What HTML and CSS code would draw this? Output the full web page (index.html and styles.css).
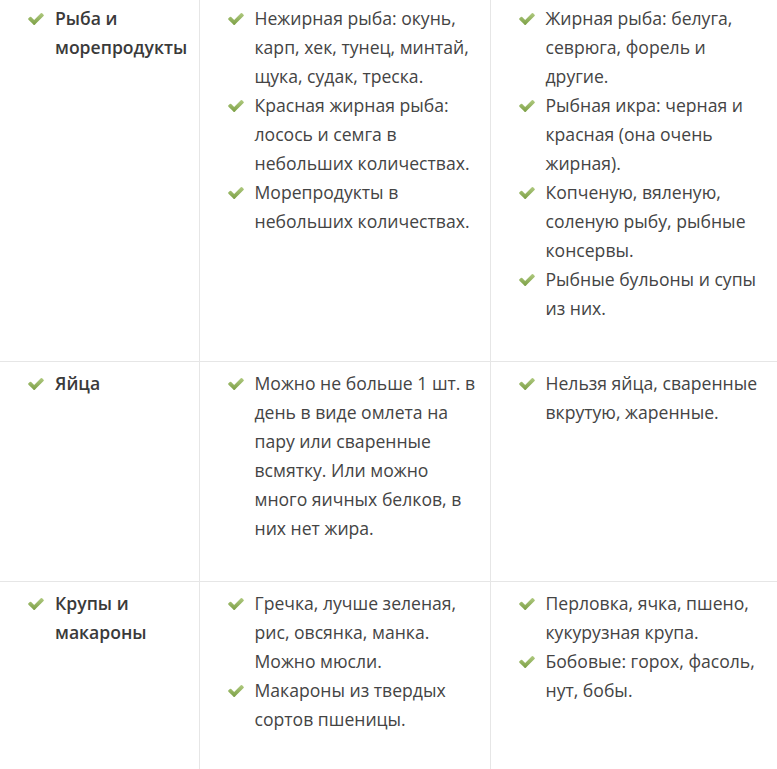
FILE: index.html
```html
<!DOCTYPE html>
<html lang="ru">
<head>
<meta charset="utf-8">
<link rel="stylesheet" href="styles.css">
</head>
<body>
<svg width="0" height="0" class="defs">
  <defs>
    <linearGradient id="g" x1="0" y1="0" x2="0" y2="1">
      <stop offset="0" stop-color="#b0ca80"/>
      <stop offset="1" stop-color="#7b9f44"/>
    </linearGradient>
    <symbol id="chk" viewBox="121 334 1550 1188">
      <path d="M1671 566q0 40-28 68l-724 724-136 136q-28 28-68 28t-68-28l-136-136-362-362q-28-28-28-68t28-68l136-136q28-28 68-28t68 28l294 295 656-657q28-28 68-28t68 28l136 136q28 28 28 68z" fill="url(#g)"/>
    </symbol>
  </defs>
</svg>
<table class="diet">
  <colgroup><col class="c1"><col class="c2"><col class="c3"></colgroup>
  <tr class="first">
    <td><ul class="list head"><li><svg class="ic"><use href="#chk"/></svg><span>Рыба и морепродукты</span></li></ul></td>
    <td><ul class="list">
      <li><svg class="ic"><use href="#chk"/></svg><span>Нежирная рыба: окунь, карп, хек, тунец, минтай, щука, судак, треска.</span></li>
      <li><svg class="ic"><use href="#chk"/></svg><span>Красная жирная рыба: лосось и семга в небольших количествах.</span></li>
      <li><svg class="ic"><use href="#chk"/></svg><span>Морепродукты в небольших количествах.</span></li>
    </ul></td>
    <td><ul class="list">
      <li><svg class="ic"><use href="#chk"/></svg><span>Жирная рыба: белуга, севрюга, форель и другие.</span></li>
      <li><svg class="ic"><use href="#chk"/></svg><span>Рыбная икра: черная и красная (она очень жирная).</span></li>
      <li><svg class="ic"><use href="#chk"/></svg><span>Копченую, вяленую, соленую рыбу, рыбные консервы.</span></li>
      <li><svg class="ic"><use href="#chk"/></svg><span>Рыбные бульоны и супы из них.</span></li>
    </ul></td>
  </tr>
  <tr>
    <td><ul class="list head"><li><svg class="ic"><use href="#chk"/></svg><span>Яйца</span></li></ul></td>
    <td><ul class="list">
      <li><svg class="ic"><use href="#chk"/></svg><span>Можно не больше 1 шт. в день в виде омлета на пару или сваренные всмятку. Или можно много яичных белков, в них нет жира.</span></li>
    </ul></td>
    <td><ul class="list">
      <li><svg class="ic"><use href="#chk"/></svg><span>Нельзя яйца, сваренные вкрутую, жаренные.</span></li>
    </ul></td>
  </tr>
  <tr class="last">
    <td><ul class="list head"><li><svg class="ic"><use href="#chk"/></svg><span>Крупы и макароны</span></li></ul></td>
    <td><ul class="list">
      <li><svg class="ic"><use href="#chk"/></svg><span>Гречка, лучше зеленая, рис, овсянка, манка. Можно мюсли.</span></li>
      <li><svg class="ic"><use href="#chk"/></svg><span>Макароны из твердых сортов пшеницы.</span></li>
    </ul></td>
    <td><ul class="list">
      <li><svg class="ic"><use href="#chk"/></svg><span>Перловка, ячка, пшено, кукурузная крупа.</span></li>
      <li><svg class="ic"><use href="#chk"/></svg><span>Бобовые: горох, фасоль, нут, бобы.</span></li>
    </ul></td>
  </tr>
</table>
</body>
</html>
```

FILE: styles.css
```css
html, body {
  margin: 0;
  padding: 0;
  background: #fff;
}
body {
  font-family: "Open Sans", "Liberation Sans", sans-serif;
  font-size: 17.6px;
  line-height: 29px;
  color: #444;
  overflow: hidden;
}
.defs {
  position: absolute;
  width: 0;
  height: 0;
}
.diet {
  border-collapse: collapse;
  table-layout: fixed;
  width: 777px;
}
.c1 { width: 199px; }
.c2 { width: 291px; }
.c3 { width: 287px; }
.diet td {
  vertical-align: top;
  padding: 7px 10px 38px 28px;
  border-left: 1px solid #e6e6e6;
  border-top: 1px solid #e6e6e6;
}
.diet td:first-child {
  border-left: none;
}
.diet tr.first td {
  border-top: none;
  padding-top: 4px;
}
.diet tr.last td {
  padding-bottom: 35px;
}
.list {
  list-style: none;
  margin: 0;
  padding: 0;
}
.list li {
  display: flex;
  align-items: flex-start;
}
.ic {
  flex: none;
  width: 16px;
  height: 12px;
  margin-top: 9px;
  margin-right: 11px;
}
.head li {
  font-weight: 600;
  color: #3a3a3a;
}
```
